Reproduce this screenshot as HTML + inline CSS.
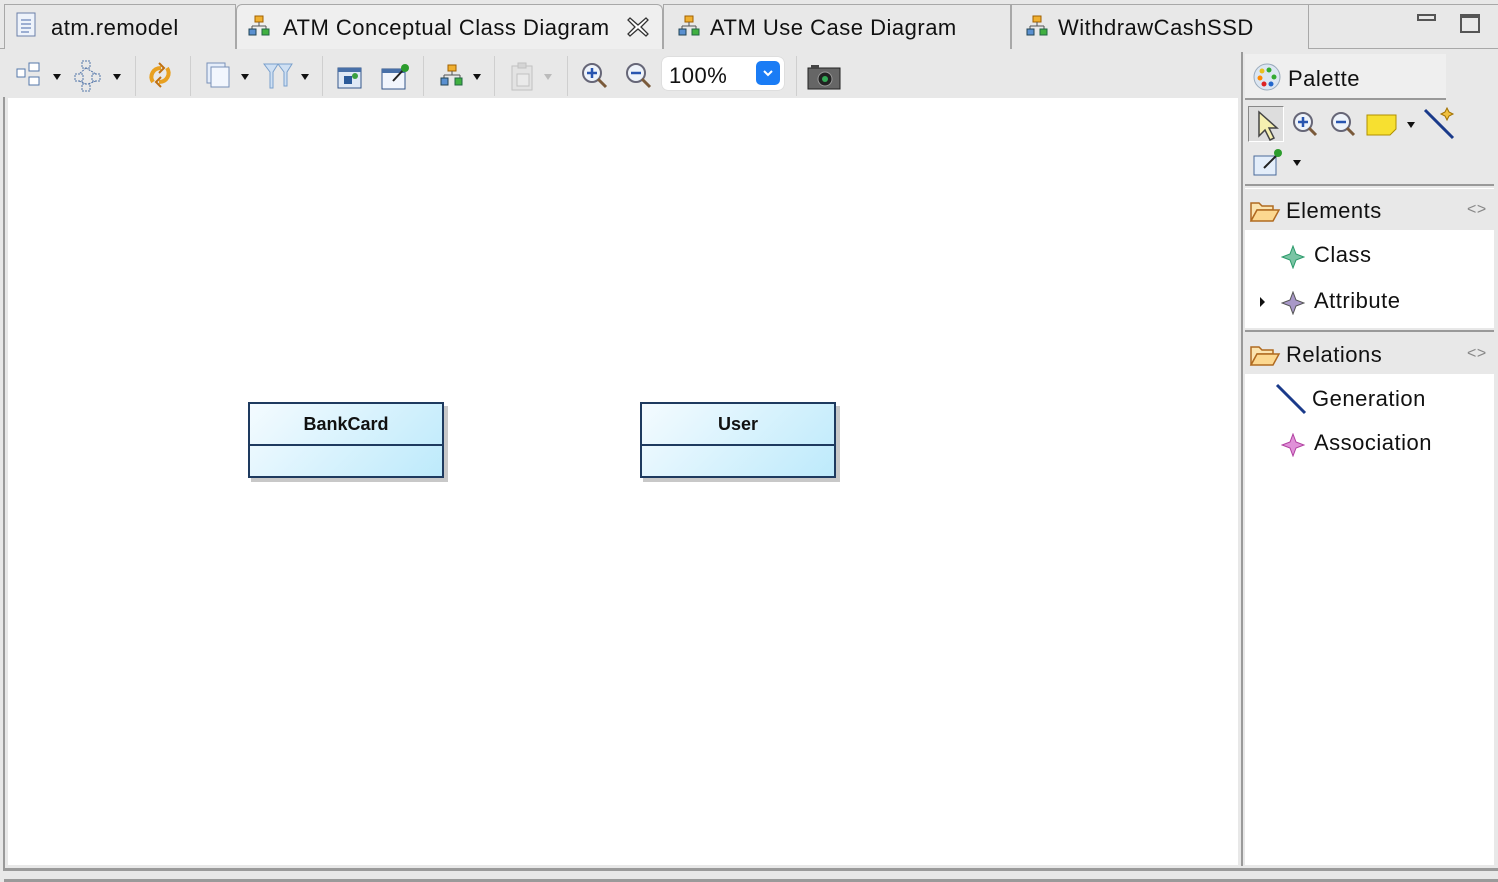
<!DOCTYPE html>
<html><head><meta charset="utf-8"><style>
*{margin:0;padding:0;box-sizing:border-box}
body{width:1498px;height:882px;background:#e8e8e8;font-family:"Liberation Sans",sans-serif;position:relative;overflow:hidden;color:#111}
.a{position:absolute}
.tab{position:absolute;top:4px;height:45px;border:1px solid #a8a8a8;border-bottom:none;font-size:22px;line-height:46px;padding-left:46px;background:#e8e8e8;letter-spacing:0.5px}
.t{font-size:22px;position:absolute;white-space:nowrap;letter-spacing:0.5px}
.sep{position:absolute;top:56px;width:1px;height:40px;background:#cfcfcf}
.dd{position:absolute;width:0;height:0;border-left:4px solid transparent;border-right:4px solid transparent;border-top:6px solid #111}
</style></head><body>
<!-- tabs -->
<div class="a" style="left:0;top:48px;width:1498px;height:1px;background:#a8a8a8"></div>
<div class="tab" style="left:4px;width:232px">atm.remodel</div>
<div class="tab" style="left:236px;width:427px;background:#efefef;height:46px;border-radius:6px 6px 0 0">ATM Conceptual Class Diagram</div>
<div class="tab" style="left:663px;width:348px">ATM Use Case Diagram</div>
<div class="tab" style="left:1011px;width:298px">WithdrawCashSSD</div>
<div class="a" style="left:1309px;top:4px;width:189px;height:1px;background:#a8a8a8"></div>
<svg class="a" style="left:627px;top:16px" width="22" height="22"><path d="M3 2l8 7 8-7 2 2-7 7 7 7-2 2-8-7-8 7-2-2 7-7-7-7z" fill="#fff" stroke="#333" stroke-width="1.3"/></svg>
<!-- tab icons -->
<svg class="a" style="left:16px;top:12px" width="22" height="26"><rect x="1" y="1" width="18" height="23" fill="#eef3fb" stroke="#6b7fa8"/><path d="M5 8h10M5 12h10M5 16h10M5 20h8" stroke="#4a6aa8"/></svg>
<svg class="a" style="left:248px;top:15px" width="22" height="22"><rect x="7" y="1" width="8" height="6" fill="#f0b030" stroke="#a06000"/><path d="M11 7v4M4 11h14M4 11v3M18 11v3" stroke="#555"/><rect x="1" y="14" width="7" height="6" fill="#5a90d0" stroke="#245"/><rect x="14" y="14" width="7" height="6" fill="#40b040" stroke="#264"/></svg>
<svg class="a" style="left:678px;top:15px" width="22" height="22"><rect x="7" y="1" width="8" height="6" fill="#f0b030" stroke="#a06000"/><path d="M11 7v4M4 11h14M4 11v3M18 11v3" stroke="#555"/><rect x="1" y="14" width="7" height="6" fill="#5a90d0" stroke="#245"/><rect x="14" y="14" width="7" height="6" fill="#40b040" stroke="#264"/></svg>
<svg class="a" style="left:1026px;top:15px" width="22" height="22"><rect x="7" y="1" width="8" height="6" fill="#f0b030" stroke="#a06000"/><path d="M11 7v4M4 11h14M4 11v3M18 11v3" stroke="#555"/><rect x="1" y="14" width="7" height="6" fill="#5a90d0" stroke="#245"/><rect x="14" y="14" width="7" height="6" fill="#40b040" stroke="#264"/></svg>
<div class="a" style="left:1417px;top:14px;width:19px;height:7px;border:2px solid #555"></div>
<div class="a" style="left:1460px;top:14px;width:20px;height:19px;border:2px solid #555;border-top-width:4px"></div>
<!-- toolbar -->
<div class="a" style="left:4px;top:49px;width:1236px;height:49px;background:#e8e8e8"></div>
<svg class="a" style="left:16px;top:62px" width="30" height="28"><rect x="1" y="7" width="8" height="8" fill="#fff" stroke="#5577aa"/><rect x="13" y="1" width="10" height="8" fill="#fff" stroke="#5577aa"/><rect x="13" y="15" width="10" height="8" fill="#fff" stroke="#5577aa"/></svg>
<div class="dd" style="left:53px;top:74px"></div>
<svg class="a" style="left:74px;top:60px" width="34" height="32"><g fill="none" stroke="#5577aa" stroke-dasharray="2 1"><rect x="8" y="1" width="8" height="7"/><rect x="1" y="14" width="8" height="7"/><rect x="18" y="14" width="8" height="7"/><rect x="8" y="24" width="8" height="7"/><path d="M12 8L5 14M12 8L22 14M5 21l7 3M22 21l-8 3"/></g></svg>
<div class="dd" style="left:113px;top:74px"></div>
<div class="sep" style="left:135px"></div>
<svg class="a" style="left:147px;top:60px" width="30" height="32"><path d="M6 22c-4-6 0-14 8-14M20 8c4 6 0 14-8 14" stroke="#e8a020" stroke-width="4" fill="none"/><path d="M12 3l5 5-5 5M14 17l-5 5 5 5" stroke="#c07010" stroke-width="2" fill="none"/></svg>
<div class="sep" style="left:190px"></div>
<svg class="a" style="left:206px;top:62px" width="28" height="28"><rect x="1" y="1" width="18" height="20" fill="#e6eefa" stroke="#7890b8"/><rect x="5" y="5" width="18" height="20" fill="#f2f6fd" stroke="#7890b8"/></svg>
<div class="dd" style="left:241px;top:74px"></div>
<svg class="a" style="left:262px;top:61px" width="34" height="30"><path d="M2 3h14l-5 8v16h-3V11z M16 3h14l-5 8v14h-3V11z" fill="#cfe0f3" stroke="#7aa0cc"/></svg>
<div class="dd" style="left:301px;top:74px"></div>
<div class="sep" style="left:322px"></div>
<svg class="a" style="left:337px;top:66px" width="26" height="24"><rect x="1" y="2" width="23" height="20" fill="#dfe9f6" stroke="#34568a"/><rect x="1" y="2" width="23" height="4" fill="#4870a8"/><rect x="7" y="10" width="8" height="8" fill="#2a5a9a"/><circle cx="18" cy="10" r="3" fill="#3aa040"/></svg>
<svg class="a" style="left:381px;top:62px" width="30" height="28"><rect x="1" y="7" width="23" height="20" fill="#f2f6fd" stroke="#34568a"/><rect x="1" y="7" width="23" height="4" fill="#4870a8"/><path d="M12 19L24 6" stroke="#222" stroke-width="2"/><circle cx="24" cy="6" r="4" fill="#2c9c2c"/></svg>
<div class="sep" style="left:423px"></div>
<svg class="a" style="left:440px;top:64px" width="24" height="24"><rect x="8" y="1" width="8" height="6" fill="#f0b030" stroke="#a06000"/><path d="M12 7v4M4 11h16M4 11v3M20 11v3" stroke="#555"/><rect x="1" y="14" width="7" height="7" fill="#5a90d0" stroke="#245"/><rect x="15" y="14" width="7" height="7" fill="#40b040" stroke="#264"/></svg>
<div class="dd" style="left:473px;top:74px"></div>
<div class="sep" style="left:494px"></div>
<svg class="a" style="left:510px;top:62px" width="26" height="30" opacity=".4"><rect x="2" y="4" width="20" height="24" fill="#ddd" stroke="#888"/><rect x="8" y="1" width="8" height="5" fill="#bbb" stroke="#888"/><rect x="7" y="12" width="12" height="12" fill="#eee" stroke="#888"/></svg>
<div class="dd" style="left:544px;top:74px;border-top-color:#bbb"></div>
<div class="sep" style="left:567px"></div>
<svg class="a" style="left:580px;top:61px" width="30" height="30"><circle cx="12" cy="12" r="9" fill="#eef3fa" stroke="#667"  stroke-width="2"/><path d="M7 12h10M12 7v10" stroke="#2855b0" stroke-width="2.5"/><path d="M18 18l8 8" stroke="#7a5a3a" stroke-width="3"/></svg>
<svg class="a" style="left:624px;top:61px" width="30" height="30"><circle cx="12" cy="12" r="9" fill="#eef3fa" stroke="#667" stroke-width="2"/><path d="M7 12h10" stroke="#2855b0" stroke-width="2.5"/><path d="M18 18l8 8" stroke="#7a5a3a" stroke-width="3"/></svg>
<div class="a" style="left:662px;top:57px;width:122px;height:33px;background:#fff;border-radius:6px;box-shadow:0 0 1px #aaa"></div>
<div class="t" style="left:669px;top:63px">100%</div>
<div class="a" style="left:756px;top:61px;width:24px;height:24px;background:#1a7cf5;border-radius:5px"></div>
<svg class="a" style="left:762px;top:68px" width="12" height="10"><path d="M2 3l4 4 4-4" stroke="#fff" stroke-width="2" fill="none"/></svg>
<div class="sep" style="left:796px"></div>
<svg class="a" style="left:807px;top:64px" width="34" height="26"><rect x="1" y="4" width="32" height="21" fill="#666" stroke="#222"/><rect x="4" y="1" width="8" height="4" fill="#444"/><circle cx="18" cy="15" r="7" fill="#222" stroke="#999"/><circle cx="18" cy="15" r="3" fill="#3a5"/></svg>
<!-- canvas -->
<div class="a" style="left:3px;top:97px;width:1495px;height:774px;border-left:2px solid #9a9a9a;border-bottom:3px solid #9a9a9a"></div>
<div class="a" style="left:8px;top:98px;width:1230px;height:767px;background:#fff"></div>
<div class="a" style="left:1241px;top:52px;width:2px;height:814px;background:#9a9a9a"></div>
<div class="a" style="left:4px;top:879px;width:1494px;height:3px;background:#9a9a9a"></div>
<!-- class boxes -->
<div class="a" style="left:251px;top:406px;width:197px;height:76px;background:#c8c8c8"></div>
<div class="a" style="left:248px;top:402px;width:196px;height:76px;border:2px solid #1e3a5f;background:linear-gradient(135deg,#f4fbff,#bdeafb)"><div style="height:42px;border-bottom:2px solid #1e3a5f;text-align:center;font-weight:bold;font-size:18px;line-height:40px">BankCard</div></div>
<div class="a" style="left:643px;top:406px;width:197px;height:76px;background:#c8c8c8"></div>
<div class="a" style="left:640px;top:402px;width:196px;height:76px;border:2px solid #1e3a5f;background:linear-gradient(135deg,#f4fbff,#bdeafb)"><div style="height:42px;border-bottom:2px solid #1e3a5f;text-align:center;font-weight:bold;font-size:18px;line-height:40px">User</div></div>
<!-- palette -->
<div class="a" style="left:1244px;top:52px;width:254px;height:814px;background:#e8e8e8"></div>
<div class="a" style="left:1245px;top:54px;width:201px;height:46px;background:#efefef;border-bottom:2px solid #999"></div>
<svg class="a" style="left:1252px;top:62px" width="30" height="30"><circle cx="15" cy="15" r="13" fill="#dce6f2" stroke="#9ab"/><circle cx="10" cy="9" r="2.5" fill="#e8c020"/><circle cx="17" cy="8" r="2.5" fill="#3a3"/><circle cx="8" cy="16" r="2.5" fill="#f80"/><circle cx="22" cy="15" r="2.5" fill="#3a3"/><circle cx="12" cy="22" r="2.5" fill="#d22"/><circle cx="19" cy="22" r="2.5" fill="#26c"/></svg>
<div class="t" style="left:1288px;top:66px">Palette</div>
<div class="a" style="left:1248px;top:106px;width:36px;height:36px;border:1px solid #888;border-right-color:#fff;border-bottom-color:#fff;background:#ddd"></div>
<svg class="a" style="left:1256px;top:110px" width="26" height="32"><path d="M3 2v24l6-6 5 10 4-2-5-10h8z" fill="#f6f0b0" stroke="#444" stroke-width="1.5"/></svg>
<svg class="a" style="left:1291px;top:110px" width="30" height="30"><circle cx="12" cy="12" r="9" fill="#eef3fa" stroke="#667" stroke-width="2"/><path d="M7 12h10M12 7v10" stroke="#2855b0" stroke-width="2.5"/><path d="M18 18l7 7" stroke="#7a5a3a" stroke-width="3"/></svg>
<svg class="a" style="left:1329px;top:110px" width="30" height="30"><circle cx="12" cy="12" r="9" fill="#eef3fa" stroke="#667" stroke-width="2"/><path d="M7 12h10" stroke="#2855b0" stroke-width="2.5"/><path d="M18 18l7 7" stroke="#7a5a3a" stroke-width="3"/></svg>
<svg class="a" style="left:1366px;top:113px" width="32" height="24"><path d="M1 2h29v14l-6 6H1z" fill="#f7e030" stroke="#b09000"/></svg>
<div class="dd" style="left:1407px;top:122px"></div>
<svg class="a" style="left:1423px;top:106px" width="34" height="34"><path d="M2 4l28 28" stroke="#1a3a8a" stroke-width="3"/><path d="M24 2l2 4 4 2-4 2-2 4-2-4-4-2 4-2z" fill="#f0c040" stroke="#a07000"/></svg>
<svg class="a" style="left:1252px;top:148px" width="34" height="30"><rect x="2" y="8" width="22" height="19" fill="#e4eefa" stroke="#4a6a9a"/><path d="M12 20L26 6" stroke="#222" stroke-width="2"/><circle cx="26" cy="5" r="4" fill="#2c9c2c"/></svg>
<div class="dd" style="left:1293px;top:160px"></div>
<div class="a" style="left:1245px;top:184px;width:249px;height:2px;background:#999"></div>
<div class="a" style="left:1245px;top:188px;width:249px;height:1px;background:#fff"></div>
<!-- Elements -->
<svg class="a" style="left:1249px;top:199px" width="32" height="24"><path d="M2 4h8l3 3h11v4H8L2 22z" fill="#fbe4b0" stroke="#b06a20" stroke-width="1.5"/><path d="M2 22l6-11h22l-6 11z" fill="#fcd890" stroke="#b06a20" stroke-width="1.5"/></svg>
<div class="t" style="left:1286px;top:198px">Elements</div>
<div class="t" style="left:1467px;top:201px;font-size:16px;color:#888">&lt;&gt;</div>
<div class="a" style="left:1245px;top:230px;width:249px;height:98px;background:#fff"></div>
<svg class="a" style="left:1281px;top:245px" width="24" height="24"><path d="M12 1l3 8 8 3-8 3-3 8-3-8-8-3 8-3z" fill="#7ac4a4" stroke="#2a9a6a"/></svg>
<div class="t" style="left:1314px;top:242px">Class</div>
<div class="a" style="left:1260px;top:297px;border-top:5px solid transparent;border-bottom:5px solid transparent;border-left:5px solid #111"></div>
<svg class="a" style="left:1281px;top:291px" width="24" height="24"><path d="M12 1l3 8 8 3-8 3-3 8-3-8-8-3 8-3z" fill="#a898c8" stroke="#555"/></svg>
<div class="t" style="left:1314px;top:288px">Attribute</div>
<div class="a" style="left:1245px;top:330px;width:249px;height:2px;background:#999"></div>
<!-- Relations -->
<svg class="a" style="left:1249px;top:343px" width="32" height="24"><path d="M2 4h8l3 3h11v4H8L2 22z" fill="#fbe4b0" stroke="#b06a20" stroke-width="1.5"/><path d="M2 22l6-11h22l-6 11z" fill="#fcd890" stroke="#b06a20" stroke-width="1.5"/></svg>
<div class="t" style="left:1286px;top:342px">Relations</div>
<div class="t" style="left:1467px;top:345px;font-size:16px;color:#888">&lt;&gt;</div>
<div class="a" style="left:1245px;top:374px;width:249px;height:491px;background:#fff"></div>
<svg class="a" style="left:1275px;top:383px" width="32" height="32"><path d="M2 2l28 28" stroke="#1a3a8a" stroke-width="3"/></svg>
<div class="t" style="left:1312px;top:386px">Generation</div>
<svg class="a" style="left:1281px;top:433px" width="24" height="24"><path d="M12 1l3 8 8 3-8 3-3 8-3-8-8-3 8-3z" fill="#e090d8" stroke="#b040a0"/></svg>
<div class="t" style="left:1314px;top:430px">Association</div>
</body></html>
